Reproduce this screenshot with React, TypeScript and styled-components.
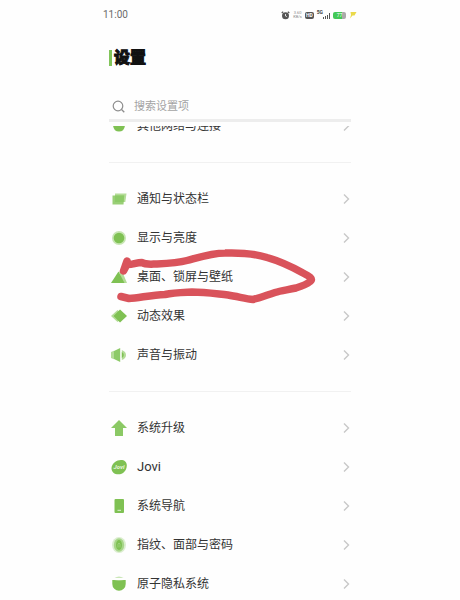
import React from "react";
import styled, { createGlobalStyle } from "styled-components";

const GlobalStyle = createGlobalStyle`
  * { box-sizing: border-box; }
  body {
    margin: 0;
    background: #fefefe;
    color: #333;
    font-family: Roboto, "Noto Sans CJK SC", sans-serif;
  }
`;

const Screen = styled.main`
  display: flex;
  flex-direction: column;
  height: 100vh;
  padding: 0 109px;
  overflow: hidden;
`;

const StatusBar = styled.header`
  display: flex;
  align-items: center;
  justify-content: space-between;
  flex: none;
  height: 30px;
  margin: 0 -6px;
`;

const Clock = styled.time`
  color: #6b6b6b;
  font-size: 10px;
  line-height: 12px;
`;

const StatusIcons = styled.div`
  display: flex;
  align-items: center;
  gap: 3px;
`;

const Speed = styled.span`
  display: flex;
  flex-direction: column;
  align-items: center;
  color: #8c8c8c;
  font-size: 4px;
  line-height: 4px;
`;

const Badge = styled.span`
  padding: 0 1px;
  border-radius: 2px;
  background: #555;
  color: #fff;
  font-size: 5px;
  font-weight: 700;
  line-height: 7px;
`;

const Signal = styled.span`
  display: flex;
  align-items: center;
  color: #444;
  font-size: 5px;
  font-weight: 700;
  line-height: 5px;
`;

const Network = styled.span`
  margin-bottom: 5px;
`;

const Battery = styled.span`
  width: 13px;
  height: 7px;
  border-radius: 2px;
  background: linear-gradient(90deg, #43c957 70%, #aaa 70%);
  color: #fff;
  font-size: 5px;
  line-height: 7px;
  text-align: center;
`;

const Title = styled.h1`
  display: flex;
  align-items: center;
  gap: 2px;
  flex: none;
  height: 24px;
  margin: 16px 0 24px;
  color: #111;
  font-size: 16px;
  font-weight: 900;
  line-height: 24px;
  -webkit-text-stroke: 1px #111;

  &::before {
    content: "";
    width: 3px;
    height: 16px;
    background: #82c45a;
  }
`;

const SearchBar = styled.label`
  display: flex;
  align-items: center;
  gap: 9px;
  flex: none;
  height: 28px;
  padding-left: 3px;
  border-bottom: 3px solid #ededed;
`;

const SearchInput = styled.input`
  flex: 1;
  min-width: 0;
  padding: 0;
  border: 0;
  outline: 0;
  background: none;
  font: inherit;
  font-size: 11px;
  line-height: 16px;

  &::placeholder { color: #a3a3a3; opacity: 1; }
`;

const List = styled.nav`
  flex: 1;
  min-height: 0;
  margin-top: 4px;
  overflow: hidden;
`;

const Group = styled.ul<{ $scrolled?: boolean }>`
  margin: ${(p) => (p.$scrolled ? "-20px 0 0" : "0")};
  padding: 0;
  list-style: none;

  & + & {
    margin-top: 17px;
    padding-top: 16px;
    border-top: 1px solid #f1f1f1;
  }
`;

const Item = styled.li`
  position: relative;
`;

const RowLink = styled.a`
  display: flex;
  align-items: center;
  gap: 9px;
  height: 39px;
  padding: 0 1px;
  color: #333;
  font-size: 12px;
  line-height: 18px;
  text-decoration: none;
`;

const Label = styled.span<{ $latin?: boolean }>`
  flex: 1;
  font-size: ${(p) => (p.$latin ? "13px" : "12px")};
  white-space: nowrap;
`;

const Scribble = styled.svg`
  position: absolute;
  top: -9px;
  left: 7px;
  pointer-events: none;
`;

const GREEN = "#7fc153";
const LIGHT = "#b4dc98";

const icons: Record<string, React.ReactNode> = {
  network: <path d="M3 8h12q-.5 6.500-6 6.500T3 8z" fill={GREEN} />,
  notice: (
    <>
      <path d="M5 3.500h11.500l-1.200 8.500H5z" fill={LIGHT} />
      <path d="M2.500 5.500h11.700l-.7 9H2.500z" fill="#99cf76" />
      <path d="M5 5.500h9.200l-.6 6.500H5z" fill="#8cca67" />
    </>
  ),
  display: (
    <>
      <circle cx="9" cy="9" r="7" fill={LIGHT} opacity=".75" />
      <circle cx="9" cy="9" r="5.300" fill={GREEN} />
    </>
  ),
  desktop: (
    <>
      <path d="M9 4l3-1 5 12h-4z" fill={LIGHT} />
      <path d="M8.500 3.500L14.500 15H1z" fill={GREEN} />
    </>
  ),
  motion: (
    <>
      <path d="M7.500 3L1 9l6.500 6 6.500-6z" fill={LIGHT} />
      <path d="M10 2.500L17 9l-7 6.500L3.500 9z" fill={GREEN} />
    </>
  ),
  sound: (
    <>
      <path d="M1 6l3-1.300v8.600l-3-1.300z" fill={LIGHT} />
      <path d="M4 5L10.200 2v14L4 13z" fill="#8dca68" />
      <path d="M11.800 4q4.200 1.500 4.200 5t-4.200 5z" fill={LIGHT} />
      <path d="M11.800 6q2 1.200 2 3t-2 3z" fill={GREEN} />
    </>
  ),
  upgrade: <path d="M9 1l8 8h-4v8H5V9H1z" fill="#8bc965" />,
  jovi: (
    <>
      <path d="M1.500 10.200c0-4.700 5.300-8.200 9.500-8.200 3.500 0 5.800 2 5.800 5.500 0 5.200-3.800 8.800-8.500 8.800C4.300 16.300 1.500 14 1.500 10.200z" fill={GREEN} />
      <text x="9" y="11.200" fill="#e7f5de" fontSize="6" fontStyle="italic" fontWeight="700" textAnchor="middle">Jovi</text>
    </>
  ),
  navigation: (
    <>
      <rect x="4.500" y="2" width="9.500" height="14" rx="1" fill={GREEN} />
      <path d="M7.500 13.300h3.500" stroke="#dff0d4" strokeWidth="1" />
    </>
  ),
  fingerprint: (
    <>
      <ellipse cx="9" cy="9" rx="7" ry="8" fill={LIGHT} opacity=".45" />
      <ellipse cx="9" cy="9" rx="5.200" ry="6.700" fill="#9bd078" opacity=".8" />
      <ellipse cx="9" cy="9" rx="3" ry="5" fill={GREEN} />
      <path d="M8 11.500V8q1-2 2 0v3.500" fill="none" stroke="#a9d78b" strokeWidth=".7" />
    </>
  ),
  privacy: (
    <>
      <path d="M4.500 3q4.500-3 9 0z" fill={LIGHT} opacity=".7" />
      <path d="M2.300 5h13.400v4a6.700 6.700 0 0 1-13.400 0z" fill={GREEN} />
      <path d="M4 5q5 1.600 10 0" fill={LIGHT} />
    </>
  ),
};

type Entry = { icon: string; label: string; marked?: boolean };

const groups: Entry[][] = [
  [{ icon: "network", label: "其他网络与连接" }],
  [
    { icon: "notice", label: "通知与状态栏" },
    { icon: "display", label: "显示与亮度" },
    { icon: "desktop", label: "桌面、锁屏与壁纸", marked: true },
    { icon: "motion", label: "动态效果" },
    { icon: "sound", label: "声音与振动" },
  ],
  [
    { icon: "upgrade", label: "系统升级" },
    { icon: "jovi", label: "Jovi" },
    { icon: "navigation", label: "系统导航" },
    { icon: "fingerprint", label: "指纹、面部与密码" },
    { icon: "privacy", label: "原子隐私系统" },
  ],
];

function Row({ icon, label, marked }: Entry) {
  return (
    <Item>
      <RowLink href="#">
        <svg width="18" height="18" viewBox="0 0 18 18" aria-hidden="true">{icons[icon]}</svg>
        <Label $latin={label === "Jovi"}>{label}</Label>
        <svg width="7" height="12" viewBox="0 0 7 12" fill="none" aria-hidden="true">
          <path d="M1 1.500L5.500 6L1 10.500" stroke="#c8c8c8" strokeWidth="1.400" />
        </svg>
      </RowLink>
      {marked && (
        <Scribble width="204" height="58" viewBox="116 248 204 58" fill="none" aria-hidden="true">
          <path
            d="M127 261L123.500 271L127 264.500C132 265 136 262.500 142 262.500C146 265 152 264 157 264C168 263.500 178 263 187 260.500C200 257 212 253 225 253C240 252.500 256 254 267 257.500C279 261 294 268 303 273C309 276 314 279 310 281.500C306 285 301 286.500 296 288C287 290 281 290.500 275 292.500C267 295 260 298 253 299.500C246 299 238 296.500 228 295C214 293.500 205 292 192 292C181 292.500 174 292.500 165 294.500C151 295 139 298 129 298.500L121 296.500"
            stroke="#d9535b"
            strokeWidth="7.500"
            strokeLinecap="round"
            strokeLinejoin="round"
          />
        </Scribble>
      )}
    </Item>
  );
}

export default function App() {
  return (
    <>
      <GlobalStyle />
      <Screen>
        <StatusBar>
          <Clock>11:00</Clock>
          <StatusIcons>
            <svg width="9" height="9" viewBox="0 0 9 9" aria-hidden="true">
              <circle cx="4.500" cy="4.800" r="3.500" fill="#555" />
              <path d="M.7 2L2.200.7M8.300 2L6.800.7" stroke="#555" strokeWidth="1.200" />
              <path d="M4.500 3v2l1.300.6" fill="none" stroke="#fff" strokeWidth=".8" />
            </svg>
            <Speed><span>3.60</span><span>KB/s</span></Speed>
            <Badge>HD</Badge>
            <Signal>
              <Network>5G</Network>
              <svg width="7" height="7" viewBox="0 0 7 7" aria-hidden="true">
                <path d="M.5 7V5M2.500 7V4M4.500 7V3M6.500 7V1" stroke="#555" />
              </svg>
            </Signal>
            <Battery>77</Battery>
            <svg width="8" height="8" viewBox="0 0 8 8" aria-hidden="true">
              <path d="M1.500 1h6L5.500 4.500H3.500L1 7.500 2 4z" fill="#ead94a" />
            </svg>
          </StatusIcons>
        </StatusBar>
        <Title>设置</Title>
        <SearchBar>
          <svg width="13" height="13" viewBox="0 0 13 13" fill="none" stroke="#8d8d8d" aria-hidden="true">
            <circle cx="6" cy="6" r="4.800" strokeWidth="1.200" />
            <path d="M9.500 9.500L12.300 12.300" strokeWidth="1.300" />
          </svg>
          <SearchInput type="search" placeholder="搜索设置项" aria-label="搜索设置项" />
        </SearchBar>
        <List>
          {groups.map((entries, i) => (
            <Group key={i} $scrolled={i === 0}>
              {entries.map((entry) => <Row key={entry.label} {...entry} />)}
            </Group>
          ))}
        </List>
      </Screen>
    </>
  );
}
